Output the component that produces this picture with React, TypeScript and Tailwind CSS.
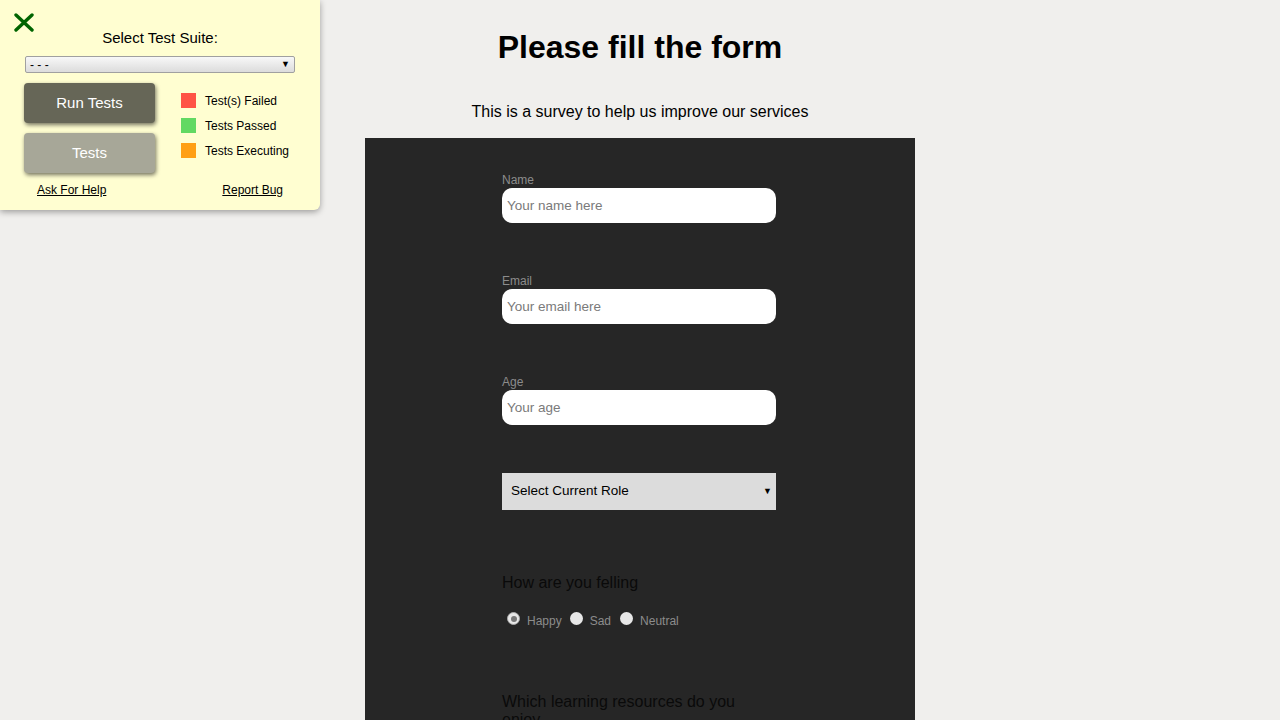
import React from "react"

const legend = [
  { label: "Test(s) Failed", color: "bg-[#ff5345]" },
  { label: "Tests Passed", color: "bg-[#62d962]" },
  { label: "Tests Executing", color: "bg-[#ff9f14]" },
]

function TestPanel() {
  return (
    <div className="absolute left-0 top-0 w-[320px] h-[210px] bg-[#fffed1] rounded-br-md shadow-[0_2px_6px_rgba(0,0,0,0.35)] text-black">
      <svg className="absolute left-[14px] top-[13px]" width="20" height="19" viewBox="0 0 20 19">
        <path d="M2 2 L18 17 M18 2 L2 17" stroke="#006400" strokeWidth="3.4" strokeLinecap="round" />
      </svg>
      <p className="pt-[29px] text-center text-[15px] leading-[18px]">Select Test Suite:</p>
      <div className="mx-[25px] mt-[9px] h-[17px] border border-[#a0a0a0] rounded-[2px] bg-gradient-to-b from-[#f8f8f8] to-[#dcdcdc] flex items-center justify-between px-[4px] text-[12px] leading-none">
        <span>- - -</span>
        <span className="text-[9px]">▼</span>
      </div>
      <div className="flex mt-[10px] pl-[24px]">
        <div className="flex flex-col gap-[10px]">
          <button className="w-[131px] h-[40px] pt-[1px] rounded-[4px] bg-[#666657] text-white text-[15px] shadow-[1px_2px_4px_rgba(0,0,0,0.55)]">
            Run Tests
          </button>
          <button className="w-[131px] h-[40px] pt-[1px] rounded-[4px] bg-[#a7a798] text-white text-[15px] shadow-[1px_2px_4px_rgba(0,0,0,0.55)]">
            Tests
          </button>
        </div>
        <div className="flex flex-col gap-[10px] ml-[26px] mt-[10px]">
          {legend.map((l) => (
            <div key={l.label} className="flex items-center h-[15px]">
              <span className={`w-[15px] h-[15px] ${l.color}`} />
              <span className="ml-[9px] text-[12px]">{l.label}</span>
            </div>
          ))}
        </div>
      </div>
      <div className="flex justify-between pl-[37px] pr-[37px] mt-[8px] text-[12px]">
        <a className="underline">Ask For Help</a>
        <a className="underline">Report Bug</a>
      </div>
    </div>
  )
}

function Field({ label, placeholder }: { label: string; placeholder: string }) {
  return (
    <div className="mb-[52px]">
      <label className="block text-[12px] leading-[13px] text-[#8c8c8c]">{label}</label>
      <input
        className="mt-[1px] w-[274px] h-[35px] rounded-[10px] bg-white px-[5px] text-[13.5px] text-black placeholder:text-[#7a7a7a] outline-none"
        placeholder={placeholder}
      />
    </div>
  )
}

export default function App() {
  return (
    <div className="relative min-h-[720px] h-[720px] overflow-hidden bg-[#f0efed] font-['Liberation_Sans',Arial,sans-serif]">
      <TestPanel />
      <h1 className="pt-[29px] text-center text-[32px] leading-[37px] font-bold text-black">Please fill the form</h1>
      <p className="mt-[37px] text-center text-[16px] leading-[18px] text-black">This is a survey to help us improve our services</p>
      <div className="mx-auto mt-[17px] w-[550px] h-[600px] bg-[#262626]">
        <div className="w-[274px] ml-[137px] pt-[36px]">
          <Field label="Name" placeholder="Your name here" />
          <Field label="Email" placeholder="Your email here" />
          <Field label="Age" placeholder="Your age" />
          <div className="-mt-[4px] h-[37px] bg-[#dcdcdc] flex items-center justify-between pl-[9px] pr-[4px] text-[13.5px] text-black">
            <span>Select Current Role</span>
            <span className="text-[9px]">▼</span>
          </div>
          <p className="mt-[64px] text-[16px] leading-[18px] text-[#0a0a0a]">How are you felling</p>
          <div className="mt-[15px] flex items-center text-[12px] text-[#8c8c8c] pl-[5px]">
            <span className="w-[13px] h-[13px] rounded-full bg-[#e8e8e8] border border-[#aaa] flex items-center justify-center">
              <span className="w-[6px] h-[6px] rounded-full bg-[#777]" />
            </span>
            <span className="ml-[7px] mt-[5px]">Happy</span>
            <span className="ml-[8px] w-[13px] h-[13px] rounded-full bg-[#e8e8e8]" />
            <span className="ml-[7px] mt-[5px]">Sad</span>
            <span className="ml-[9px] w-[13px] h-[13px] rounded-full bg-[#e8e8e8]" />
            <span className="ml-[7px] mt-[5px]">Neutral</span>
          </div>
          <p className="mt-[63px] text-[16px] leading-[18px] text-[#0a0a0a] w-[250px]">Which learning resources do you enjoy</p>
        </div>
      </div>
    </div>
  )
}
